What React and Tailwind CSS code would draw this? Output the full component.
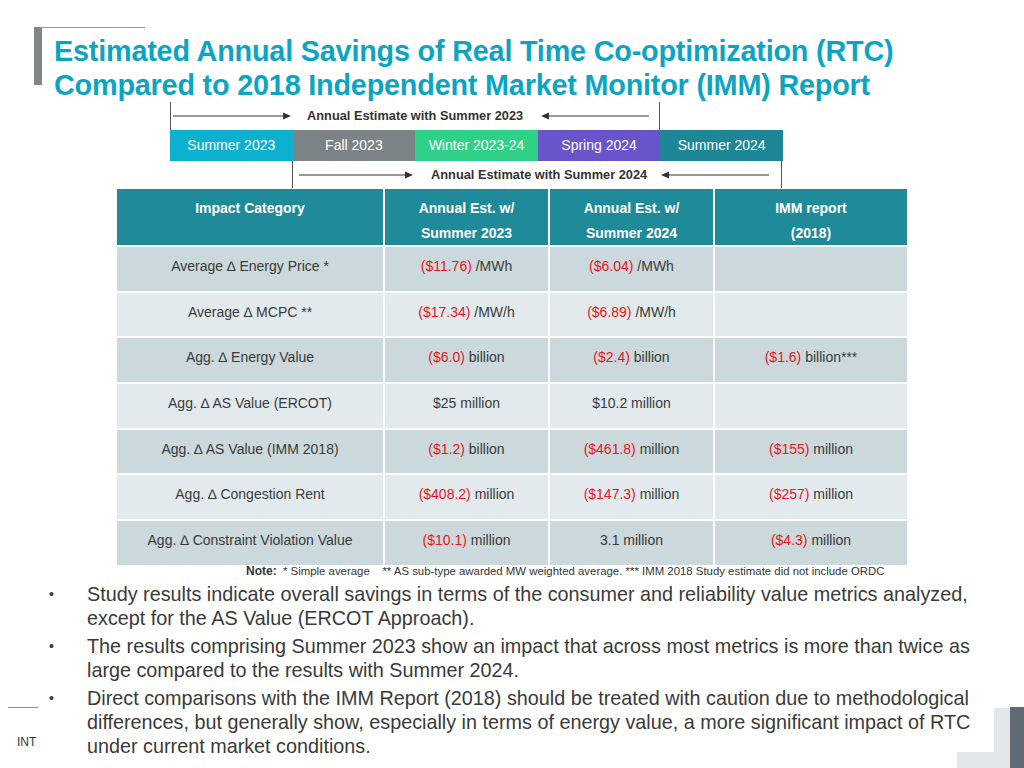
import React from "react";

const rows = [
  ["Average \u2206 Energy Price *", [["($11.76)", " /MWh"]], [["($6.04)", " /MWh"]], null],
  ["Average \u2206 MCPC **", [["($17.34)", " /MW/h"]], [["($6.89)", " /MW/h"]], null],
  ["Agg. \u2206 Energy Value", [["($6.0)", " billion"]], [["($2.4)", " billion"]], [["($1.6)", " billion***"]]],
  ["Agg. \u2206 AS Value (ERCOT)", [["", "$25 million"]], [["", "$10.2 million"]], null],
  ["Agg. \u2206 AS Value (IMM 2018)", [["($1.2)", " billion"]], [["($461.8)", " million"]], [["($155)", " million"]]],
  ["Agg. \u2206 Congestion Rent", [["($408.2)", " million"]], [["($147.3)", " million"]], [["($257)", " million"]]],
  ["Agg. \u2206 Constraint Violation Value", [["($10.1)", " million"]], [["", "3.1 million"]], [["($4.3)", " million"]]],
];

const segments = [
  ["Summer 2023", "bg-[#0db0cf]"],
  ["Fall 2023", "bg-[#7b8387]"],
  ["Winter 2023-24", "bg-[#2fd088]"],
  ["Spring 2024", "bg-[#6955c9]"],
  ["Summer 2024", "bg-[#1d8797]"],
];

const Arrow = ({ width, dir }) => (
  <svg width={width} height="8" viewBox={`0 0 ${width} 8`} className="shrink-0">
    {dir === "right" ? (
      <>
        <line x1="0" y1="4" x2={width - 7} y2="4" stroke="#333" strokeWidth="1" />
        <polygon points={`${width - 8},0.5 ${width},4 ${width - 8},7.5`} fill="#333" />
      </>
    ) : (
      <>
        <line x1="7" y1="4" x2={width} y2="4" stroke="#333" strokeWidth="1" />
        <polygon points="8,0.5 0,4 8,7.5" fill="#333" />
      </>
    )}
  </svg>
);

const Value = ({ parts }) =>
  parts ? (
    <span>
      {parts.map(([red, rest], i) => (
        <span key={i}>
          {red && <span className="text-[#e8151d]">{red}</span>}
          {rest}
        </span>
      ))}
    </span>
  ) : null;

export default function App() {
  return (
    <div className="relative w-[1024px] h-[768px] overflow-hidden bg-white font-['Liberation_Sans',Arial,sans-serif] text-[#3a3a3a]">
      {/* title */}
      <div className="flex pt-[27px] pl-[34px]">
        <div className="w-[8px] h-[58px] bg-[#80868a]" />
        <div className="flex flex-col">
          <div className="w-[103px] h-[1px] bg-[#9a9a9a]" />
          <h1 className="pl-[12px] pt-[6px] text-[28.8px] leading-[34px] font-bold text-[#0ba5c3] tracking-[-0.2px] whitespace-nowrap">
            Estimated Annual Savings of Real Time Co-optimization (RTC)
            <br />
            Compared to 2018 Independent Market Monitor (IMM) Report
          </h1>
        </div>
      </div>

      {/* timeline */}
      <div className="ml-[170px] w-[490px] h-[28px] border-x border-[#555] flex items-center">
        <div className="ml-[2px]"><Arrow width={118} dir="right" /></div>
        <span className="ml-[16px] text-[12.8px] font-bold text-[#333] whitespace-nowrap">Annual Estimate with Summer 2023</span>
        <div className="ml-auto mr-[10px]"><Arrow width={108} dir="left" /></div>
      </div>
      <div className="ml-[170px] flex h-[31px]">
        {segments.map(([label, bg]) => (
          <div key={label} className={`${bg} w-[122.6px] flex items-center justify-center text-white text-[14px]`}>
            {label}
          </div>
        ))}
      </div>
      <div className="ml-[292px] w-[490px] h-[27px] border-x border-[#555] flex items-center">
        <div className="ml-[6px]"><Arrow width={114} dir="right" /></div>
        <span className="ml-[18px] text-[12.8px] font-bold text-[#333] whitespace-nowrap">Annual Estimate with Summer 2024</span>
        <div className="ml-auto mr-[12px]"><Arrow width={108} dir="left" /></div>
      </div>

      {/* table */}
      <div className="ml-[117px] mt-[1px] w-[790px] grid grid-cols-[266px_163px_163px_192px] gap-[2px] bg-white text-[14px]">
        {[["Impact Category", ""], ["Annual Est. w/", "Summer 2023"], ["Annual Est. w/", "Summer 2024"], ["IMM report", "(2018)"]].map(([a, b]) => (
          <div key={a + b} className="h-[56px] bg-[#1f8a99] text-white font-bold text-center leading-[25px] pt-[7px]">
            <div>{a}</div>
            <div>{b}</div>
          </div>
        ))}
        {rows.map(([label, v1, v2, v3], i) => {
          const bg = i % 2 === 0 ? "bg-[#cbd8dc]" : "bg-[#e3eaed]";
          return (
            <React.Fragment key={label}>
              <div className={`${bg} h-[43.7px] text-center pt-[11px] leading-[16px]`}>{label}</div>
              <div className={`${bg} h-[43.7px] text-center pt-[11px] leading-[16px]`}><Value parts={v1} /></div>
              <div className={`${bg} h-[43.7px] text-center pt-[11px] leading-[16px]`}><Value parts={v2} /></div>
              <div className={`${bg} h-[43.7px] text-center pt-[11px] leading-[16px]`}><Value parts={v3} /></div>
            </React.Fragment>
          );
        })}
      </div>

      {/* note */}
      <div className="ml-[246px] h-[12px] leading-[12px] mt-[-1px] text-[#333] whitespace-pre">
        <span className="text-[12px] font-bold">Note:</span>
        <span className="text-[11.4px]">{"  * Simple average    ** AS sub-type awarded MW weighted average. *** IMM 2018 Study estimate did not include ORDC"}</span>
      </div>

      {/* bullets */}
      <ul className="ml-[49px] mt-[6px] flex flex-col gap-[4px] text-[19.8px] leading-[24px] text-[#3a3a3a]">
        <li className="flex">
          <span className="w-[38px] text-[14px]">•</span>
          <span className="whitespace-nowrap">
            Study results indicate overall savings in terms of the consumer and reliability value metrics analyzed,
            <br />
            except for the AS Value (ERCOT Approach).
          </span>
        </li>
        <li className="flex">
          <span className="w-[38px] text-[14px]">•</span>
          <span className="whitespace-nowrap">
            The results comprising Summer 2023 show an impact that across most metrics is more than twice as
            <br />
            large compared to the results with Summer 2024.
          </span>
        </li>
        <li className="flex">
          <span className="w-[38px] text-[14px]">•</span>
          <span className="whitespace-nowrap">
            Direct comparisons with the IMM Report (2018) should be treated with caution due to methodological
            <br />
            differences, but generally show, especially in terms of energy value, a more significant impact of RTC
            <br />
            under current market conditions.
          </span>
        </li>
      </ul>

      {/* footer decorations */}
      <div className="absolute left-[8px] top-[707px] w-[30px] h-[1px] bg-[#8a8a8a]" />
      <div className="absolute left-[17px] top-[733px] text-[12px] text-[#333]">INT</div>
      <div className="absolute left-[994px] top-[708px] w-[16px] h-[60px] bg-[#e4e7ea]" />
      <div className="absolute left-[957px] top-[752px] w-[37px] h-[16px] bg-[#e4e7ea]" />
      <div className="absolute left-[1010px] top-[707px] w-[14px] h-[61px] bg-[#5f6a72]" />
    </div>
  );
}
